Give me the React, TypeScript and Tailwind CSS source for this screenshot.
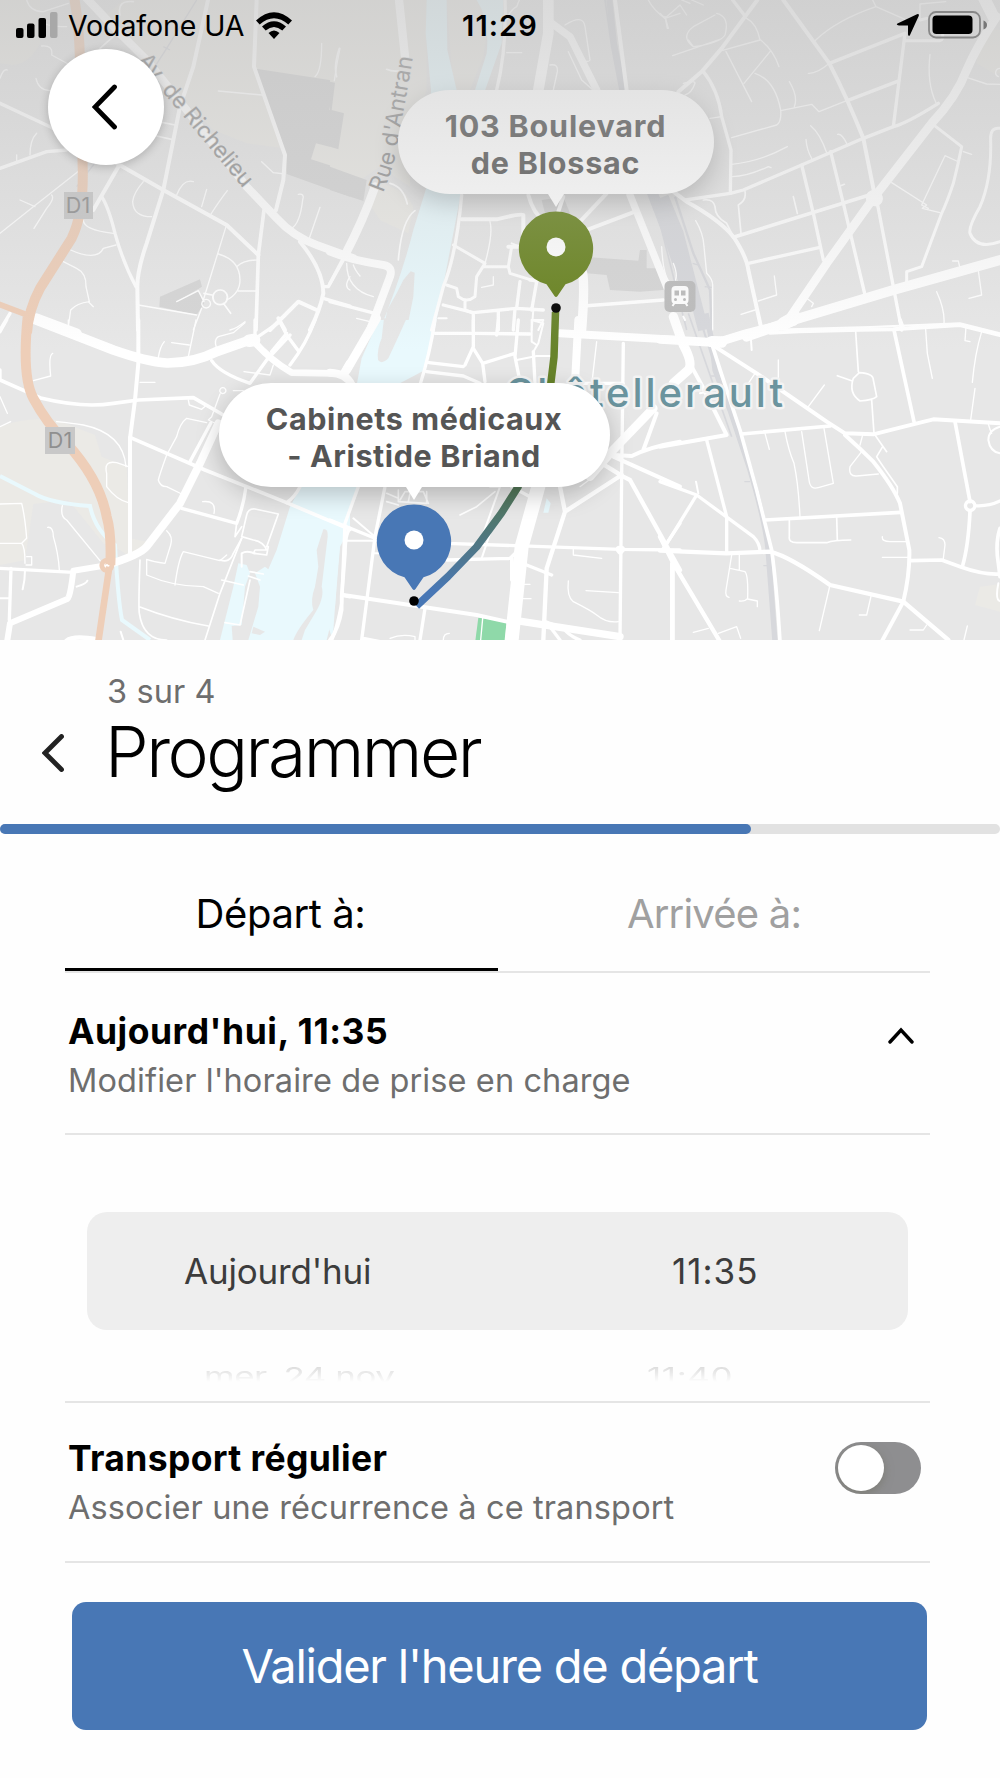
import React, { useState } from 'react';

interface MapTile {
  x: number;
  y: number;
  areas: [string, string][];
  rails?: [number, string][];
  roads: [number, string][];
  highways?: [number, string][];
}

const PARK = '#ebeae6';
const WATER = '#e9f9fd';
const LAND = '#e7e7e7';
const BUILDING = '#d6d6d6';

// Each tile is drawn at three units per pixel
const TILES: MapTile[] = [
  {
    x: 0,
    y: 0,
    areas: [
      [PARK, 'M370 0H1050V590L860 520L850 445L740 430L640 390L560 310L440 170L300 60Z'],
      [PARK, 'M0 0H120V130Q90 190 40 195L0 190Z'],
      [BUILDING, 'M768 206L1003 242L988 330L1032 340L1017 448L948 430L933 478L1050 515V590L860 522L858 462L790 280Z'],
      [BUILDING, 'M480 890L600 838L606 860L530 905L595 872L612 910L590 945L478 920Z'],
    ],
    rails: [[4, 'M590 0L500 145L400 300L280 495L230 560M490 140L510 150']],
    roads: [
      [24, 'M255 -10L345 85L440 180L560 330L740 560L830 655Q880 710 950 735L1060 775'],
      [12, 'M624 0L580 200L540 320L500 520L490 570L440 730Q412 810 412 860L414 990'],
      [12, 'M770 0L762 200L790 280L855 465L850 540L828 630'],
      [10, 'M0 310L150 380L190 405'],
      [10, 'M0 505L140 455L200 450'],
      [12, 'M350 490L490 570L680 675L775 765'],
      [12, 'M358 495L280 630'],
      [10, 'M305 590Q325 620 345 700Q370 790 408 860'],
      [11, 'M792 630L775 765L768 990'],
      [12, 'M900 725Q970 810 970 880Q960 930 930 990'],
      [10, 'M970 895L1050 918M1030 780L985 860H970'],
      [12, 'M810 990L895 905L950 930M835 955L855 990'],
      [30, 'M110 955L230 1000'],
      [10, 'M30 940L0 990'],
      [4, 'M80 0Q90 35 130 35L205 10M120 60Q130 80 200 80'],
      [4, 'M125 138Q160 135 155 165L210 195'],
      [4, 'M0 235Q10 205 22 210M108 235Q115 270 150 272L175 285M110 400Q90 420 90 465M50 465V485'],
      [4, 'M0 700L100 620L240 510M60 600L105 620M155 585Q165 595 140 625L102 685'],
      [4, 'M430 545Q400 580 398 605Q400 650 455 650M530 585Q550 535 580 545M605 620L620 568M633 642Q660 600 682 572'],
      [4, 'M250 660Q250 690 340 700M212 750Q290 785 310 745L348 735'],
      [4, 'M190 785L230 805Q260 820 258 860L268 905Q230 910 212 930L205 980M265 905L280 920'],
      [4, 'M678 680L610 900M655 762Q720 780 720 840Q720 880 680 900M710 800Q730 780 775 780M715 873H768'],
      [5, 'M660 870A22 22 0 1 0 661 870M670 910L692 940M636 885L612 880'],
      [4, 'M618 898A13 13 0 1 0 619 898M605 925L580 990M415 915L590 945M530 905L595 872L612 905'],
      [4, 'M655 273L785 285M965 130Q965 215 945 230M1020 145Q1010 190 1003 242'],
      [4, 'M785 485L820 518L855 522M895 583Q915 580 908 600Q900 670 875 685M960 622L928 715'],
      [5, 'M475 365L525 375M470 408L515 418M360 45Q350 0 400 5M300 145L340 110'],
      [4, 'M690 990Q710 985 735 965M1050 830Q1030 860 1050 870'],
    ],
    highways: [
      [30, 'M222 -10Q237 70 240 180L248 500Q252 640 215 715L120 865Q85 930 81 1000'],
      [18, 'M-10 910L90 948'],
    ],
  },
  {
    x: 330,
    y: 0,
    areas: [
      [PARK, 'M0 0H290V270L240 420V560L150 500L60 560L0 500Z'],
      [PARK, 'M350 0H445L475 60L460 170L420 270H370Z'],
      [PARK, 'M110 600L160 550L225 580L250 620L235 700L150 660Z'],
      [WATER, 'M290 0L287 100L303 270L290 560L250 690Q215 830 145 1000H312L392 585L455 300L515 130L520 0H440Q480 60 470 160L435 270H380L352 150L350 0Z'],
      [LAND, 'M242 814L254 818L250 890L235 965L222 1000H158L172 930L200 880L220 840Z'],
      [BUILDING, 'M0 245L15 248L5 330L42 340L25 448L0 440ZM0 500L110 540L100 603L0 570Z'],
      [BUILDING, 'M760 770L925 782L930 750H950V805H1000V870L930 875L840 870L830 825L770 820Z'],
      [BUILDING, 'M635 600L700 590L720 640L650 660Z'],
    ],
    rails: [
      [18, 'M838 0L852 130L880 270'],
      [5, 'M825 0L845 140L870 270'],
      [32, 'M960 560L1010 690L1080 900'],
    ],
    roads: [
      [25, 'M207 0L225 170'],
      [26, 'M135 560Q100 660 45 765'],
      [24, 'M0 755Q60 780 160 795Q190 800 180 830L120 990'],
      [10, 'M45 765L0 850M0 905L135 940'],
      [10, 'M525 0Q530 150 500 270M395 585Q380 760 340 860L305 990'],
      [32, 'M655 0L655 100L625 270'],
      [22, 'M665 70L720 110L800 270M900 585L1010 860'],
      [12, 'M855 0L890 270'],
      [12, 'M595 585Q610 640 640 660M700 590L680 650M830 580L750 665M915 635L770 690'],
      [12, 'M395 658H500Q570 640 580 645V740L535 740'],
      [9, 'M370 735L465 790L440 830L435 890Q410 910 385 890L380 865L350 855M465 800L535 800L545 740M405 900V930L425 938M535 800L540 820L620 845'],
      [10, 'M340 915L430 938L560 925L640 930M570 845L560 925M430 938V990M505 935V990M620 845L605 930'],
      [28, 'M758 820Q765 860 755 990'],
      [10, 'M760 918L1000 900M600 840H660M555 925L550 990'],
      [5, 'M28 145Q10 200 20 230M170 208Q185 215 205 213M180 550Q220 560 232 612M255 632Q215 660 205 780'],
      [4, 'M530 158H575M530 60Q540 30 560 20L568 0M660 195Q685 190 682 215L670 270M715 155L755 240L800 280'],
      [4, 'M705 75Q760 40 765 80L780 180Q770 195 740 160M1050 40L1005 55Q970 30 955 0M1005 50L1015 85'],
      [4, 'M50 790Q50 870 130 890M70 795Q75 810 90 828M80 955L120 965M480 665Q490 700 465 790M455 862L490 855V830'],
      [6, 'M605 960H640L625 990M610 930L605 990M545 730L570 740M325 955H350'],
      [4, 'M995 740Q1000 840 1025 850Q1050 840 1030 790'],
    ],
  },
  {
    x: 660,
    y: 0,
    areas: [
      [PARK, 'M960 120L990 85L1020 90V220H1000L950 190Z'],
    ],
    rails: [
      [32, 'M10 590L55 700L130 990'],
      [7, 'M45 590L100 760L150 870L155 990'],
      [5, 'M-20 590L80 990'],
      [4, 'M98 790L118 796M134 860L155 862'],
    ],
    roads: [
      [12, 'M292 0L255 50L185 145L128 212L55 275'],
      [10, 'M218 0L255 48M128 212Q175 270 185 350L213 450L211 580'],
      [12, 'M370 0L508 190Q560 290 610 415L645 590'],
      [10, 'M508 190L735 100L700 380M562 302L718 242'],
      [10, 'M75 600L211 580L250 570L425 495L610 415L700 380Q740 370 835 310'],
      [12, 'M40 575L80 605Q180 660 220 710Q260 770 265 810L305 990'],
      [36, 'M970 -10L1000 50'],
      [26, 'M1010 50Q950 140 920 210Q890 290 815 370L640 595L500 790L385 960'],
      [9, 'M735 122H840Q850 122 848 100M780 60L800 55'],
      [46, 'M640 593L646 596'],
      [11, 'M220 712L645 580'],
      [10, 'M425 495L460 640L490 780M512 455L550 610L615 885M265 790L480 742M650 600L725 990'],
      [30, 'M260 1010L400 960L700 870L1020 780'],
      [36, 'M370 970L405 950'],
      [9, 'M815 370L905 440Q895 490 880 550Q860 610 845 640L785 800L740 815V860'],
      [9, 'M1020 385Q990 380 992 420Q995 540 960 620Q925 680 930 700Q950 750 1020 725'],
      [6, 'M300 990Q600 985 900 970L1020 1000'],
      [4, 'M0 40L15 55L60 15L80 45M15 50L22 85M65 0L90 10M95 0L130 15'],
      [4, 'M170 40Q210 50 195 105Q180 130 100 140Q60 110 100 80L165 45M38 167L180 118M100 140L85 120'],
      [4, 'M260 55Q290 70 300 120L185 152M198 155L275 305M302 120Q340 150 357 200M330 155L252 250M285 220Q345 240 362 330Q365 365 350 375L215 413'],
      [4, 'M388 245Q415 290 403 320M362 332L455 313L477 335L560 302M445 220Q470 222 508 190M465 122Q530 60 648 20L735 58M638 0L648 20M780 60V12L857 5'],
      [4, 'M150 355L185 350M215 493Q300 485 382 440M217 530Q260 530 325 500L333 503M438 418Q440 450 455 475M452 377Q480 400 500 458M533 403Q545 400 560 430'],
      [5, 'M130 600Q160 595 165 620Q165 650 200 670L220 710M255 575Q260 600 235 615L243 700M400 590L412 640M540 558L553 553'],
      [4, 'M107 662Q130 700 132 740L140 820Q160 840 158 860V990M343 828L350 885L295 903M243 943L285 930M440 895L460 910L455 920'],
      [4, 'M695 548L800 615L787 625L840 638M890 483L855 467L785 615L805 625M910 455L935 463M810 163Q800 250 828 308'],
      [4, 'M920 232L980 252L1020 253M1020 205A13 13 0 0 0 1015 230M830 875Q855 930 852 970M955 812L965 885L927 895M878 783L895 783L900 805'],
      [4, 'M70 250Q105 240 105 250Q95 280 75 285'],
    ],
  },
  {
    x: 0,
    y: 320,
    areas: [
      [PARK, 'M0 320Q70 290 170 300L285 345L305 410L380 440L390 655L440 665L395 715L360 690L310 670L205 540L100 552L75 720L0 735Z'],
      [WATER, 'M905 495H1050V625L1020 680L1005 860L980 960H745L775 860L780 800L765 760L795 740L805 748L830 690L870 560Z'],
      [WATER, 'M715 730L740 735L750 760L735 800L725 915L695 918L698 960H660L700 800Z'],
      [LAND, 'M970 628Q985 625 983 650L965 800Q975 830 945 880L915 930L905 960H880Q890 930 940 870Q930 840 945 800L955 740L950 690Z'],
      [LAND, 'M760 920L795 935L780 945L755 940Z'],
    ],
    roads: [
      [29, 'M95 -5L340 90Q440 125 500 129Q580 130 650 95L750 60'],
      [38, 'M748 62L762 60'],
      [20, 'M758 60Q810 120 875 158L1000 160L1030 165'],
      [12, 'M415 0V130L405 240L390 355V700'],
      [11, 'M0 180L125 235Q250 265 340 250L415 240L580 233L670 285'],
      [11, 'M390 352L615 450L740 500L860 548L1050 628'],
      [24, 'M655 310L600 430L540 550L440 680Q420 705 320 735'],
      [18, 'M320 736L220 752Q210 840 200 838L30 910L22 960'],
      [10, 'M0 745L220 757M33 745L28 900'],
      [10, 'M545 565L710 610Q730 560 738 500M860 548Q885 530 900 500'],
      [10, 'M632 310L570 425M765 0V50M635 122Q660 160 750 190L800 120L870 45'],
      [10, 'M760 60L840 5L860 45L895 92M945 0Q920 70 870 135M815 95L860 40'],
      [11, 'M1050 625Q1035 640 1035 700L1025 830V870Q1015 930 990 960M1025 825L1050 830'],
      [26, 'M1030 165L1050 130'],
      [10, 'M0 180V150M20 0L0 35'],
      [4, 'M158 100Q145 105 152 168L100 182M0 230L22 280M0 320L32 305M170 305Q220 310 250 315Q370 340 378 440'],
      [4, 'M385 440L350 428Q310 420 320 460V500Q350 540 385 548M187 557Q180 590 200 600L300 722'],
      [4, 'M0 552L65 550Q75 590 80 655L65 670H0M143 622Q160 620 160 650Q175 700 178 750M65 670Q75 680 75 730M80 710H95V735H78'],
      [4, 'M205 0V15M420 187H465M475 112Q480 80 493 65M515 68L568 75M588 0L565 110M650 85Q640 60 655 50L700 38L735 8'],
      [4, 'M668 203A9 9 0 1 0 669 203M660 222L635 290L625 300L650 312M565 240L568 255L605 268L620 255M700 212H730M732 155L810 165L820 135'],
      [4, 'M620 308L560 295Q540 310 530 350L500 405Q480 460 475 480Q480 500 500 500L545 522M608 545Q650 540 642 580'],
      [4, 'M500 632Q520 650 512 675L495 730Q460 725 440 718V765Q520 800 610 800L655 820M525 795Q535 720 550 695L660 722L680 705'],
      [5, 'M420 720Q415 860 418 880Q430 960 500 960M418 860Q520 900 625 918M660 720Q690 730 700 700L725 655M710 610L705 650L725 620'],
      [5, 'M835 582L765 567Q745 565 740 585L725 650L760 660Q790 665 800 690H765L760 700L800 705L805 680M835 582L800 680'],
      [5, 'M725 655L660 820L615 960M665 780L730 795M750 755L790 762M745 768L780 780M750 780L720 915L675 908'],
      [6, 'M725 740V700Q740 690 765 700M0 835H28M75 750Q75 780 68 808M230 800Q260 790 262 782M362 935L370 960'],
      [14, 'M200 962Q220 945 290 958'],
    ],
    highways: [
      [30, 'M83 -10Q65 170 100 235Q140 310 200 370Q300 480 320 590Q335 640 331 735'],
      [20, 'M328 740L295 965'],
      [30, 'M320 729A7 7 0 1 0 321 729'],
    ],
  },
  {
    x: 330,
    y: 320,
    areas: [
      [WATER, 'M145 0H312L285 150L200 195H80L95 115Z'],
      [LAND, 'M162 -5H230L205 50L175 115Q155 135 144 120Q140 90 155 55Z'],
      [WATER, 'M-5 495H85L35 620L22 760L8 960L-5 920Z'],
      [WATER, 'M650 535L662 550L655 578H640Z'],
      ['#8fd9a9', 'M445 893L530 903L525 962H436Z'],
    ],
    roads: [
      [26, 'M140 -5L50 150'],
      [24, 'M0 158Q50 160 65 195'],
      [10, 'M315 0Q300 100 270 195M315 40H430L600 42M297 128L400 140M290 155L400 168L450 190'],
      [10, 'M430 0V80L405 135M430 85L458 130L555 100M505 0L500 45M458 130L465 185M565 0L555 110L570 185M610 95L615 190'],
      [6, 'M605 0L640 10L625 70L610 95M605 0V65L620 75M560 120L620 108H660'],
      [24, 'M745 0L735 190'],
      [24, 'M690 40L1050 60'],
      [10, 'M880 70L875 465L870 960M750 190H880'],
      [26, 'M970 265L840 400L780 470'],
      [42, 'M625 500L575 680L545 960'],
      [12, 'M980 280L940 390M850 405L905 408Q960 380 1050 365M850 410L1050 500'],
      [13, 'M815 430L880 470L900 480L1050 750M875 465L705 575L690 500M705 575L650 745L640 960'],
      [10, 'M350 670L870 688L1050 690M350 720L540 715L575 680M545 715V780M590 735L665 765M1000 685L1050 610'],
      [4, 'M800 65L785 195M870 688A7 7 0 1 0 871 688'],
      [22, 'M868 688H874'],
      [12, 'M40 825L240 855L440 885L530 905'],
      [22, 'M545 900L870 950'],
      [10, 'M85 500L45 610L35 850Q20 930 5 960M0 600L135 655M165 500L135 650L95 960M100 955L150 965M285 865L270 960'],
      [6, 'M45 662H140M70 595L135 650M130 700H160M460 640L510 500L480 500M480 640L455 715'],
      [5, 'M390 585L440 560L495 515M205 510V545L290 550V515M170 520L205 535M170 545L205 555M210 540L225 515H280L295 550M235 545L240 520'],
      [4, 'M730 685V705L815 715M715 783Q710 830 730 845Q780 870 800 885Q830 910 865 905M768 812L865 818M580 793H600M580 836H603'],
      [10, 'M545 500L600 530M1025 730V960M645 905L700 925Q720 950 750 960M660 920L690 960'],
      [4, 'M180 955Q215 940 255 950V965M340 960Q340 940 358 940M458 895L452 960M750 500L790 470L810 440'],
    ],
  },
  {
    x: 660,
    y: 320,
    areas: [[PARK, 'M960 800L1020 792V875L945 855Z']],
    rails: [
      [5, 'M85 -20L215 350'],
      [16, 'M138 -20L155 60L165 150L210 270L270 450Q320 620 325 700L345 965'],
      [6, 'M115 -20L190 220L265 440'],
      [4, 'M150 168H165M253 485H270M310 737H322'],
    ],
    roads: [
      [28, 'M40 -10L70 75Q100 130 85 150L40 190'],
      [26, 'M0 58L170 68L260 40L400 5'],
      [34, 'M155 65L185 66M375 12L400 0'],
      [12, 'M330 38Q500 30 700 28L900 15L1020 45M720 0L728 22'],
      [11, 'M155 70Q180 150 240 330L290 510L335 690Q350 800 360 965'],
      [12, 'M165 80L290 160L500 305L555 340L640 343Q750 315 820 298L1020 310'],
      [11, 'M702 30L762 305M885 305L930 545M930 575Q925 680 907 740'],
      [10, 'M930 543A14 14 0 1 0 931 543M945 557Q985 560 1020 543'],
      [12, 'M95 140L125 195L200 345L0 380'],
      [10, 'M140 360L200 590V700M0 485L110 525L280 650Q300 670 300 695M110 525L15 680'],
      [11, 'M245 342L510 318M315 600L722 577'],
      [13, 'M0 692L200 700L330 695Q390 710 510 795L730 845L865 960M0 650L40 730L180 965M38 735V960'],
      [12, 'M555 345Q600 385 640 425Q700 500 720 550L748 690Q750 760 730 845L665 965'],
      [11, 'M750 722L845 720L905 742Q970 765 1020 762M1020 625Q1005 670 1015 730L1020 770'],
      [5, 'M587 35L595 155M532 167L575 182M598 158Q640 160 640 180L650 230Q640 240 600 243Q565 220 580 175L598 158M635 240L642 340'],
      [4, 'M797 28L802 100L817 175M918 20L915 62L930 65M965 35Q945 100 937 187M945 205L932 300M985 312Q990 330 995 340'],
      [6, 'M1020 320Q985 330 985 360Q990 395 1020 400'],
      [4, 'M355 120V175M493 195L445 260M285 160L265 190M315 340L328 388M375 335Q385 390 402 430Q415 490 420 590'],
      [4, 'M425 335L447 480Q450 510 475 503L520 490L492 325M608 345L600 375M605 395L570 440Q565 470 590 468L655 462'],
      [5, 'M645 345L680 395M668 380L650 410Q655 420 712 500V520M388 600V650Q385 668 410 668H500Q520 660 572 660M530 590L532 660'],
      [4, 'M667 650Q665 665 690 665H745M667 712H745M837 653Q855 655 855 675L850 715M510 795L478 932M635 820L620 885L598 885M800 915L790 930H750M922 918L912 960'],
      [4, 'M215 705L198 810Q195 830 207 832M238 705V750M210 745L255 755Q265 765 263 835Q255 845 238 843M263 837L292 843V860M100 937L145 925M175 940L230 920L242 955'],
      [6, 'M1015 790Q1005 840 1020 843M120 220L140 215M75 0L70 -10M273 60L275 90M108 485L115 520'],
    ],
  },
];

const MapCanvas: React.FC = () => (
  <svg viewBox="0 0 1000 640" className="block h-[640px] w-[1000px]" fill="none">
    <defs>
      <linearGradient id="route" x1="555" y1="400" x2="555" y2="600" gradientUnits="userSpaceOnUse">
        <stop offset="0" stopColor="#67832a" />
        <stop offset="0.43" stopColor="#537755" />
        <stop offset="0.6" stopColor="#50776f" />
        <stop offset="0.8" stopColor="#4e7792" />
        <stop offset="0.95" stopColor="#4877b5" />
      </linearGradient>
    </defs>
    <rect width="1000" height="640" fill={LAND} />
    {TILES.map((t) => (
      <g key={`a${t.x}-${t.y}`} transform={`translate(${t.x} ${t.y}) scale(.33333)`}>
        {t.areas.map(([fill, d]) => (
          <path key={d} d={d} fill={fill} />
        ))}
      </g>
    ))}
    <path d="M0 476L35 494Q50 503 90 506Q95 530 115 545Q118 600 122 620L150 640" stroke={WATER} strokeWidth="4" />
    {TILES.map((t) => (
      <g key={`r${t.x}-${t.y}`} transform={`translate(${t.x} ${t.y}) scale(.33333)`} strokeLinejoin="round">
        {t.rails?.map(([w, d]) => (
          <path key={d} d={d} stroke="#d7d8dc" strokeWidth={w} />
        ))}
        {t.roads.map(([w, d]) => (
          <path key={d} d={d} stroke="#fff" strokeWidth={w} strokeLinecap="round" />
        ))}
      </g>
    ))}
    {TILES.map((t) => (
      <g key={`h${t.x}-${t.y}`} transform={`translate(${t.x} ${t.y}) scale(.33333)`} stroke="#eeceb8">
        {t.highways?.map(([w, d]) => (
          <path key={d} d={d} strokeWidth={w} />
        ))}
      </g>
    ))}
    <circle cx="107" cy="565" r="1" fill="#fff" />

    <g fontFamily="Inter, sans-serif">
      <g fill="#8f8f8f" fontSize="21.5" textAnchor="middle">
        <rect x="64" y="192" width="29" height="27" fill="#c8c8c8" />
        <text x="78" y="213">D1</text>
        <rect x="45" y="427" width="30" height="27" fill="#c8c8c8" />
        <text x="60" y="448">D1</text>
      </g>
      <path id="richelieu" d="M137 61L166 96L247 193" />
      <path id="antran" d="M383 193Q395 165 398 140Q408 90 414 50" />
      <g fill="#969696" stroke={LAND} strokeWidth="1.5" paintOrder="stroke" fontSize="22.5">
        <text>
          <textPath href="#richelieu" textLength="166">Av. de Richelieu</textPath>
        </text>
        <text>
          <textPath href="#antran" textLength="139">Rue d'Antran</textPath>
        </text>
      </g>
      <text
        x="505"
        y="406.5"
        textLength="278"
        fontSize="40"
        fontWeight="500"
        fill="#6b949e"
        stroke="#f3f3f3"
        strokeWidth="5"
        strokeLinejoin="round"
        paintOrder="stroke"
      >
        Châtellerault
      </text>
    </g>

    <g transform="translate(664.5 281)">
      <rect width="31" height="31" rx="5" fill="#bcbcbc" />
      <rect x="7" y="5" width="17" height="18" rx="4" fill="#fff" />
      <path d="M10 9.5H14.5V14.5H10ZM16.5 9.5H21V14.5H16.5Z" fill="#bcbcbc" />
      <circle cx="11" cy="18.5" r="1.5" fill="#bcbcbc" />
      <circle cx="20" cy="18.5" r="1.5" fill="#bcbcbc" />
      <path d="M10 22L8 25M21 22L23 25" stroke="#fff" strokeWidth="2" />
    </g>

    <path d="M555.5 312L554 357L550 390L518 487L501.5 513L476.500 547L448 576.500L416.500 606" stroke="url(#route)" strokeWidth="7.5" strokeLinejoin="round" />
  </svg>
);

interface MarkerProps {
  lines: string[];
  color: string;
  className: string;
  bubbleClass: string;
}

const Marker: React.FC<MarkerProps> = ({ lines, color, className, bubbleClass }) => (
  <div className={`absolute flex flex-col items-center ${className}`}>
    <div
      className={`flex h-[104px] flex-col justify-center rounded-full bg-white pt-[3px] text-center text-[30.5px] leading-[37px] font-bold text-[#555] shadow-[0_8px_24px_rgba(0,0,0,0.22)] ${bubbleClass}`}
    >
      {lines.map((line) => (
        <span key={line}>{line}</span>
      ))}
    </div>
    <svg viewBox="0 0 76 126" className="block h-[126px] w-[76px]">
      <path d="M30 0H46L38 13Z" fill="#fff" />
      <path d="M38 17.5a37 37 0 0 1 9.5 72.8L39.5 102q-1.5 2-3 0L28.5 90.3A37 37 0 0 1 38 17.5Z" fill={color} />
      <circle cx="38" cy="53" r="9.5" fill="#fff" />
      <circle cx="38" cy="114" r="4.8" fill="#000" />
    </svg>
  </div>
);

const StatusBar: React.FC = () => (
  <div className="absolute inset-x-0 top-0 grid h-[50px] grid-cols-3 items-center text-[28.5px] text-black">
    <div className="flex items-center pl-4">
      <svg viewBox="0 0 42 26" className="h-[26px] w-[42px]">
        <rect x="0" y="16" width="7.5" height="10" rx="2" />
        <rect x="11" y="11.5" width="7.5" height="14.5" rx="2" />
        <rect x="22.5" y="6" width="7.5" height="20" rx="2" />
        <rect x="34" y="0" width="7.5" height="26" rx="2" fill="#a8a8a8" />
      </svg>
      <span className="ml-[10px] pt-[2px] tracking-[-0.1px] whitespace-nowrap">Vodafone UA</span>
      <svg viewBox="0 0 36 27" className="ml-[12px] h-[27px] w-[36px] shrink-0">
        <path d="M0 8.5Q18-8 36 8.5L32.3 12.5Q18 0 3.7 12.5Z" />
        <path d="M6 14.5Q18 4 30 14.5L26.3 18.5Q18 11.5 9.7 18.5Z" />
        <path d="M12.5 21Q18 16 23.5 21L18 27Z" />
      </svg>
    </div>
    <span className="pt-[2px] text-center text-[29px] font-semibold tracking-[1.1px]">11:29</span>
    <div className="flex items-center justify-end pr-[12px]">
      <svg viewBox="0 0 24 24" className="mr-[8px] h-[24px] w-[24px]">
        <path d="M1.5 10.5L21 1.2Q23.5.5 22.7 3L14 22Q12.7 24 12 21.5V12.5H3Q-.5 11.8 1.5 10.5Z" />
      </svg>
      <svg viewBox="0 0 60 28" className="h-[28px] w-[60px]">
        <rect x="1" y="1" width="51" height="25.5" rx="7" fill="none" stroke="#888" strokeWidth="1.8" />
        <rect x="4.5" y="4.5" width="40" height="18.5" rx="4" />
        <path d="M55.5 9.5Q59 11 59 14T55.5 18.5Z" fill="#777" />
      </svg>
    </div>
  </div>
);

interface SectionTextProps {
  title: string;
  subtitle: string;
  titleClass: string;
  subtitleClass: string;
}

const SectionText: React.FC<SectionTextProps> = ({ title, subtitle, titleClass, subtitleClass }) => (
  <div className="flex flex-col whitespace-nowrap">
    <span className={`text-[35.5px] leading-[50px] font-bold text-black ${titleClass}`}>{title}</span>
    <span className={`text-[32.5px] leading-[48px] text-[#6e6e6e] ${subtitleClass}`}>{subtitle}</span>
  </div>
);

const App: React.FC = () => {
  const [tab, setTab] = useState('depart');
  const [recurring, setRecurring] = useState(false);

  return (
    <div className="h-[1778px] w-[1000px] overflow-hidden bg-[#fefefe] font-['Inter',sans-serif]">
      <div className="relative h-[640px] overflow-hidden">
        <MapCanvas />
        <Marker
          lines={['103 Boulevard', 'de Blossac']}
          color="#67821d"
          className="top-[90px] left-[397.5px]"
          bubbleClass="w-[316px] tracking-[0.8px]"
        />
        <Marker
          lines={['Cabinets médicaux', '- Aristide Briand']}
          color="#4877b5"
          className="top-[383px] left-[218.5px]"
          bubbleClass="w-[391px] tracking-[0.6px]"
        />
        <div className="absolute inset-x-0 top-0 h-[350px] bg-linear-to-b from-[rgba(192,192,192,0.58)] to-[rgba(192,192,192,0)]" />
        <button className="absolute top-[49px] left-[48px] flex size-[116px] items-center justify-center rounded-full bg-white shadow-[0_2px_10px_rgba(0,0,0,0.2)]">
          <svg viewBox="0 0 26 46" className="mr-[3px] h-[46px] w-[26px]">
            <path d="M22.5 3L3 23L22.5 43" fill="none" stroke="#000" strokeWidth="4.8" strokeLinecap="round" />
          </svg>
        </button>
        <StatusBar />
      </div>

      <div className="flex h-[183.5px] pl-[42px]">
        <svg viewBox="0 0 22 38" className="mt-[94px] h-[38px] w-[22px]">
          <path d="M19.5 2.5L3 19L19.5 35.5" fill="none" stroke="#222" strokeWidth="4.8" strokeLinecap="round" />
        </svg>
        <div className="ml-[43px] flex flex-col pt-[28px]">
          <span className="text-[32.5px] leading-[48px] tracking-[0.1px] text-[#6e6e6e]">3 sur 4</span>
          <h1 className="-mt-px -ml-[2px] text-[69.5px] leading-[74px] font-light tracking-[-2.5px] text-black">Programmer</h1>
        </div>
      </div>

      <div className="h-[10px] rounded-full bg-[#e2e2e2]">
        <div className="h-full w-[751px] rounded-full bg-[#4877b5]" />
      </div>

      <div className="mr-[70px] ml-[65px] flex h-[139.5px] border-b-2 border-[#e5e5e5] text-[40px]">
        <button
          onClick={() => setTab('depart')}
          className={`w-[433px] border-b-3 pt-[26px] pr-[2px] tracking-[-0.4px] ${tab === 'depart' ? 'border-black text-black' : 'border-transparent text-[#a0a0a0]'}`}
        >
          Départ à:
        </button>
        <button
          onClick={() => setTab('arrivee')}
          className={`w-[432px] border-b-3 pt-[26px] tracking-[-0.8px] ${tab === 'arrivee' ? 'border-black text-black' : 'border-transparent text-[#a0a0a0]'}`}
        >
          Arrivée à:
        </button>
      </div>

      <div className="mr-[70px] ml-[65px] flex h-[162px] justify-between border-b-2 border-[#e5e5e5] pt-[34px] pr-[16px] pl-[3px]">
        <SectionText
          title="Aujourd'hui, 11:35"
          subtitle="Modifier l'horaire de prise en charge"
          titleClass="tracking-[0.5px]"
          subtitleClass="tracking-[0.1px]"
        />
        <svg viewBox="0 0 26 17" className="mt-[20px] h-[17px] w-[26px]">
          <path d="M2 15L13 3L24 15" fill="none" stroke="#000" strokeWidth="3.4" strokeLinecap="round" />
        </svg>
      </div>

      <div className="mr-[70px] ml-[65px] h-[268px] border-b-2 border-[#e5e5e5] pt-[77px] text-[35px]">
        <div className="mx-[22px] grid h-[118px] grid-cols-[383px_438px] items-center rounded-[20px] bg-[#eee] pt-px text-[#3c3c3c]">
          <span className="pl-[97px] tracking-[-0.2px]">Aujourd'hui</span>
          <span className="pl-[202px] tracking-[1px]">11:35</span>
        </div>
        <div className="mt-[32px] flex h-[40px] pl-[139px] text-[#d2d2d2] mask-[linear-gradient(black,transparent_20px)]">
          <span className="w-[443px] origin-top scale-y-70 leading-[40px] tracking-[-0.5px]">mer. 24 nov.</span>
          <span className="origin-top scale-y-70 leading-[40px] tracking-[0.6px]">11:40</span>
        </div>
      </div>

      <div className="mr-[70px] ml-[65px] flex h-[160px] justify-between border-b-2 border-[#e5e5e5] pt-[31px] pr-[9px] pl-[3px]">
        <SectionText
          title="Transport régulier"
          subtitle="Associer une récurrence à ce transport"
          titleClass="tracking-[0.35px]"
          subtitleClass="tracking-[0.13px]"
        />
        <button
          onClick={() => setRecurring(!recurring)}
          className={`mt-[8px] flex h-[52px] w-[86px] items-center overflow-hidden rounded-full bg-[#8e8e90] p-[3px] ${recurring ? 'justify-end' : 'justify-start'}`}
        >
          <span className="size-[46px] rounded-full bg-white shadow-[0_3px_10px_rgba(120,120,110,0.8)]" />
        </button>
      </div>

      <button className="mt-[39px] ml-[72px] flex h-[128px] w-[855px] items-center justify-center rounded-[14px] bg-[#4877b5] text-[47px] tracking-[-1.25px] text-white">
        Valider l'heure de départ
      </button>
    </div>
  );
};

export default App;
